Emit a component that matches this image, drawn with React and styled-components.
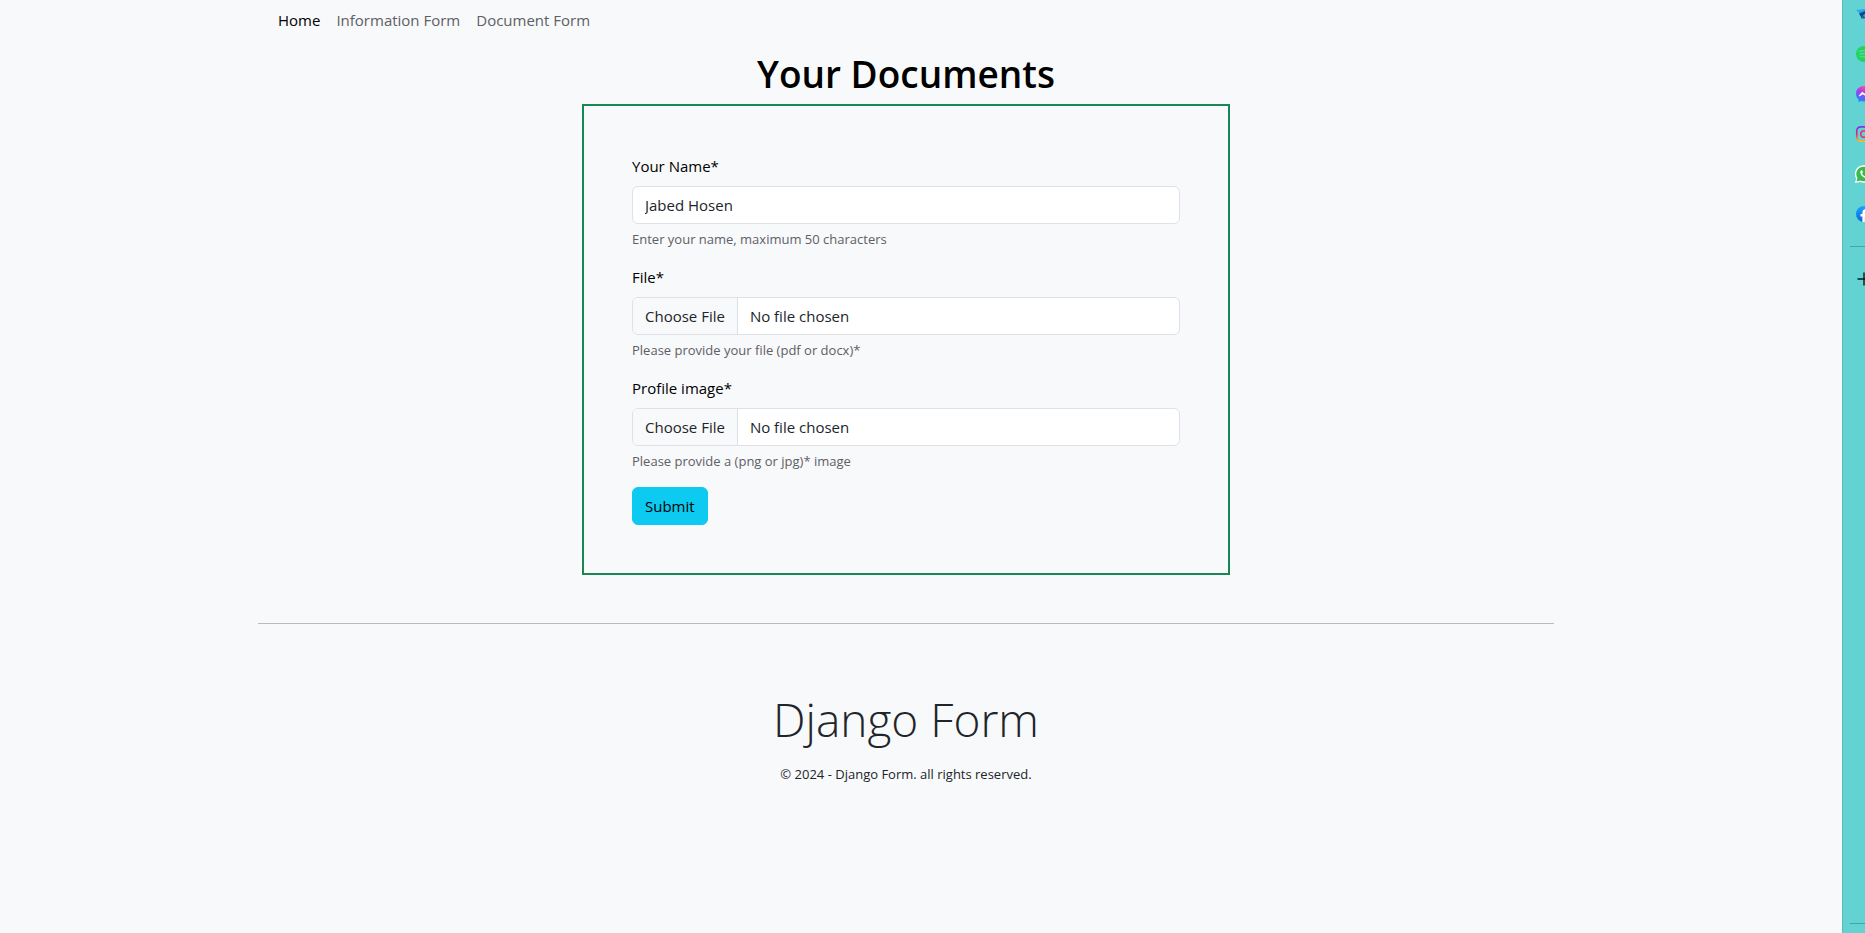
import React from "react";
import styled, { createGlobalStyle } from "styled-components";

const GlobalStyle = createGlobalStyle`
  *, *::before, *::after { box-sizing: border-box; }
  body {
    margin: 0;
    background: #f8f9fa;
    color: #212529;
    font-family: "Segoe UI", "Open Sans", "Noto Sans", sans-serif;
    font-size: 15px;
    line-height: 24px;
  }
`;

const Shell = styled.div`
  display: flex;
  min-height: 100vh;
  background: #f8f9fb;
`;

const Page = styled.div`
  flex: 1;
  min-width: 0;
  padding-right: 30px;
`;

const Container = styled.div`
  max-width: 1296px;
  margin: 0 auto;
`;

const Nav = styled.nav`
  display: flex;
  padding: 0 12px;
`;

const NavLink = styled.a`
  padding: 8px;
  color: ${({ $active }) => ($active ? "#000" : "#5d6063")};
  text-decoration: none;
`;

const Title = styled.h1`
  margin: 0;
  padding: 10px 0 6px;
  color: #000;
  font-size: 37px;
  font-weight: 600;
  line-height: 48px;
  text-align: center;
`;

const Card = styled.form`
  width: 50%;
  margin: 0 auto;
  padding: 48px;
  border: 2px solid #198754;
`;

const Field = styled.div`
  margin-bottom: 16px;
`;

const Label = styled.label`
  display: block;
  margin-bottom: 8px;
  color: #000;
`;

const Input = styled.input`
  display: block;
  width: 100%;
  height: 38px;
  padding: 6px 12px;
  overflow: hidden;
  border: 1px solid #dee2e6;
  border-radius: 6px;
  background: #fff;
  color: #212529;
  font: inherit;

  &::file-selector-button {
    height: 38px;
    margin: -7px 12px -7px -12px;
    padding: 6px 12px;
    border: 0 solid #dee2e6;
    border-right-width: 1px;
    border-radius: 0;
    background: #f8f9fa;
    color: #212529;
    font: inherit;
  }
`;

const Help = styled.div`
  margin-top: 5px;
  color: #5d6063;
  font-size: 13px;
  line-height: 20px;
`;

const Submit = styled.button`
  display: block;
  height: 38px;
  padding: 6px 12px;
  border: 1px solid #0dcaf0;
  border-radius: 6px;
  background: #0dcaf0;
  color: #000;
  font: inherit;
  cursor: pointer;
`;

const Footer = styled.footer`
  margin-top: 48px;
  padding: 66px 0;
  border-top: 1px solid #b9bbbd;
  text-align: center;
`;

const FooterTitle = styled.h2`
  margin: 0 0 16px;
  font-size: 46px;
  font-weight: 300;
  line-height: 58px;
`;

const Copyright = styled.p`
  margin: 0;
  font-size: 13px;
  line-height: 21px;
`;

const Rail = styled.aside`
  display: flex;
  flex-direction: column;
  flex: none;
  width: 23px;
  padding: 6px 0 9px 8px;
  overflow: hidden;
  background: #63d2d2;
  box-shadow: inset 1px 0 #57bcbd;
`;

const RailButton = styled.button`
  display: block;
  flex: none;
  width: 28px;
  height: 16px;
  margin-bottom: 24px;
  padding: 0 6px;
  border: 0;
  background: none;
  cursor: pointer;

  svg {
    display: block;
    overflow: visible;
  }
`;

const Divider = styled.hr`
  width: 100%;
  margin: ${({ $end }) => ($end ? "auto 0 0" : "0 0 24px")};
  border: 0;
  border-top: 1px solid #4ba3a4;
`;

const apps = [
  {
    name: "Mail",
    art: (
      <>
        <path d="M0 4L16 2L13 13L4 8Z" fill="#2aa9ea" />
        <path d="M3 7.5L16 2L7 9.5L6 13Z" fill="#0b4a8b" />
        <path d="M6 13L7 9.5L12 13L9 12Z" fill="#155fa8" />
      </>
    ),
  },
  {
    name: "Spotify",
    art: (
      <>
        <circle cx="8" cy="8" r="8" fill="#1ed760" />
        <path d="M3.2 5.3Q8.5 3.8 13 6M3.8 8.2Q8.5 7 12 9M4.3 10.9Q8 10 11.2 11.6" fill="none" stroke="#63d29b" strokeWidth="1.3" strokeLinecap="round" />
      </>
    ),
  },
  {
    name: "Messenger",
    art: (
      <>
        <defs>
          <linearGradient id="messenger" x1="0.7" y1="0" x2="0.3" y2="1">
            <stop offset="0" stopColor="#ff5b83" />
            <stop offset="0.45" stopColor="#a63cf5" />
            <stop offset="1" stopColor="#168aff" />
          </linearGradient>
        </defs>
        <path d="M8 0C3.4 0 0 3.3 0 7.7C0 10.1 1 12.1 2.6 13.5V16L5.3 15.1C6.1 15.4 7 15.5 8 15.5C12.6 15.5 16 12.1 16 7.7S12.6 0 8 0Z" fill="url(#messenger)" />
        <path d="M3.2 10L6.2 6.2L9 8.3L12.8 5.8L9.8 9.8L7 7.8Z" fill="#fff" stroke="#fff" strokeLinejoin="round" />
      </>
    ),
  },
  {
    name: "Instagram",
    art: (
      <>
        <defs>
          <linearGradient id="instagram" x1="0" y1="0" x2="0" y2="1">
            <stop offset="0" stopColor="#7b35ef" />
            <stop offset="0.55" stopColor="#e92d73" />
            <stop offset="1" stopColor="#ffba22" />
          </linearGradient>
        </defs>
        <rect x="0.8" y="0.8" width="14.4" height="14.4" rx="4" fill="none" stroke="url(#instagram)" strokeWidth="1.7" />
        <circle cx="8" cy="8" r="3.3" fill="none" stroke="#e92d73" strokeWidth="1.6" />
        <circle cx="12.2" cy="3.8" r="1" fill="#b938c8" />
      </>
    ),
  },
  {
    name: "WhatsApp",
    art: (
      <>
        <path d="M-1 17L0.2 12.5A8.7 8.7 0 1 1 4.3 16Z" fill="#fff" />
        <path d="M0.5 15.5L1.5 12A7.3 7.3 0 1 1 4.5 14.6Z" fill="#35bd4b" />
        <path d="M5.3 4.3C3 5.7 5 9.2 7 10.7C9.2 12.4 11.5 12.7 12 10.3L10 9.2L8.8 10.3C7.5 9.8 6.4 8.6 6 7.5L6.9 6.5L6.2 4.3Z" fill="#fff" />
      </>
    ),
  },
  {
    name: "Facebook",
    art: (
      <>
        <defs>
          <linearGradient id="facebook" x1="0" y1="0" x2="0" y2="1">
            <stop offset="0" stopColor="#19a6fa" />
            <stop offset="1" stopColor="#0866dc" />
          </linearGradient>
        </defs>
        <circle cx="8" cy="8" r="8" fill="url(#facebook)" />
        <path d="M6.4 16V10.5H4.5V8H6.4V6.3C6.4 4.2 7.7 3.1 9.6 3.1L11.2 3.3V5.3H10.1C9.1 5.3 8.9 5.8 8.9 6.6V8H11.1L10.7 10.5H8.9V16Z" fill="#fff" />
      </>
    ),
  },
];

const fields = [
  { id: "name", label: "Your Name*", type: "text", value: "Jabed Hosen", help: "Enter your name, maximum 50 characters" },
  { id: "file", label: "File*", type: "file", help: "Please provide your file (pdf or docx)*" },
  { id: "image", label: "Profile image*", type: "file", help: "Please provide a (png or jpg)* image" },
];

function RailItem({ name, children }) {
  return (
    <RailButton type="button" aria-label={name}>
      <svg width="16" height="16" viewBox="0 0 16 16" aria-hidden="true">
        {children}
      </svg>
    </RailButton>
  );
}

export default function App() {
  return (
    <>
      <GlobalStyle />
      <Shell>
        <Page>
          <Container>
            <Nav>
              <NavLink href="#home" $active>Home</NavLink>
              <NavLink href="#information">Information Form</NavLink>
              <NavLink href="#documents">Document Form</NavLink>
            </Nav>
            <main>
              <Title>Your Documents</Title>
              <Card onSubmit={(e) => e.preventDefault()}>
                {fields.map((f) => (
                  <Field key={f.id}>
                    <Label htmlFor={f.id}>{f.label}</Label>
                    <Input id={f.id} type={f.type} defaultValue={f.value} aria-describedby={`${f.id}-help`} />
                    <Help id={`${f.id}-help`}>{f.help}</Help>
                  </Field>
                ))}
                <Submit type="submit">Submit</Submit>
              </Card>
            </main>
            <Footer>
              <FooterTitle>Django Form</FooterTitle>
              <Copyright>© 2024 - Django Form. all rights reserved.</Copyright>
            </Footer>
          </Container>
        </Page>
        <Rail>
          {apps.map((app) => (
            <RailItem key={app.name} name={app.name}>{app.art}</RailItem>
          ))}
          <Divider />
          <RailItem name="Add">
            <path d="M1.5 8H14.5M8 1.5V14.5" stroke="#061a1b" strokeWidth="1.4" />
          </RailItem>
          <Divider $end />
        </Rail>
      </Shell>
    </>
  );
}
